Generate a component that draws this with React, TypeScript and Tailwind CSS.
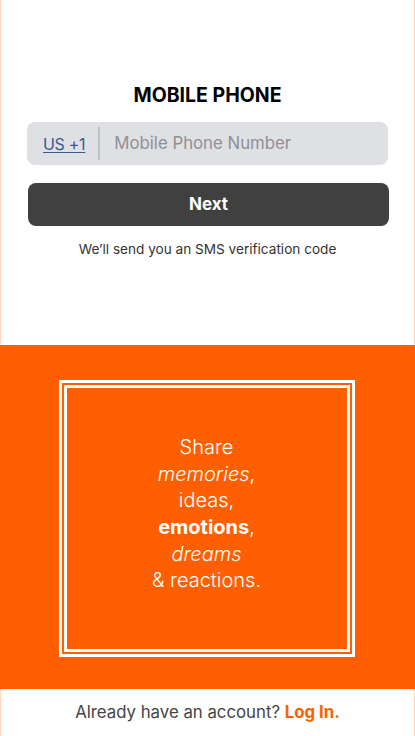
const App = () => {
  return (
    <div className="min-h-screen w-full flex flex-col bg-white border-x border-[#ffd8bd] font-['Inter',sans-serif]">
      <section className="h-[345px] px-[26px] pt-[81px] flex flex-col items-center">
        <h1 className="text-[19.5px] leading-[28px] font-bold text-black">MOBILE PHONE</h1>
        <div className="mt-[13px] w-full h-[43px] flex items-center rounded-lg bg-[#dfe0e3]">
          <span className="pl-[16px] pr-[13px] text-[16px] tracking-[-0.3px] text-[#3d5a8f] underline underline-offset-2">US +1</span>
          <div className="w-[2px] h-[33px] bg-[#c0c1c4]"></div>
          <input
            className="ml-[14px] flex-1 bg-transparent outline-none text-[16.8px] text-black placeholder-[#8f9195]"
            placeholder="Mobile Phone Number"
          />
        </div>
        <button className="mt-[18px] w-full h-[43px] ml-[2px] rounded-lg bg-[#404040] text-white text-[17px] font-bold">
          Next
        </button>
        <p className="mt-[13px] text-[13.6px] text-[#333]">We’ll send you an SMS verification code</p>
      </section>
      <section className="h-[344px] bg-[#ff5f00] flex items-center justify-center -mx-px">
        <div className="w-[296px] h-[277px] border-[3px] border-white p-[2px] mt-[2px] ml-[-2px]">
          <div className="w-full h-full pb-[8px] border-[3px] border-white flex flex-col items-center justify-center text-white text-[20px] leading-[26.7px] font-light text-center">
            <span>Share</span>
            <span><i>memories</i>,</span>
            <span>ideas,</span>
            <span><b className="font-bold">emotions</b>,</span>
            <span><i>dreams</i></span>
            <span>&amp; reactions.</span>
          </div>
        </div>
      </section>
      <footer className="h-[47px] flex items-center justify-center text-[16.8px] text-[#444]">
        <span>
          Already have an account? <span className="font-bold text-[#ff5f00]">Log In.</span>
        </span>
      </footer>
    </div>
  );
};

export default App;
